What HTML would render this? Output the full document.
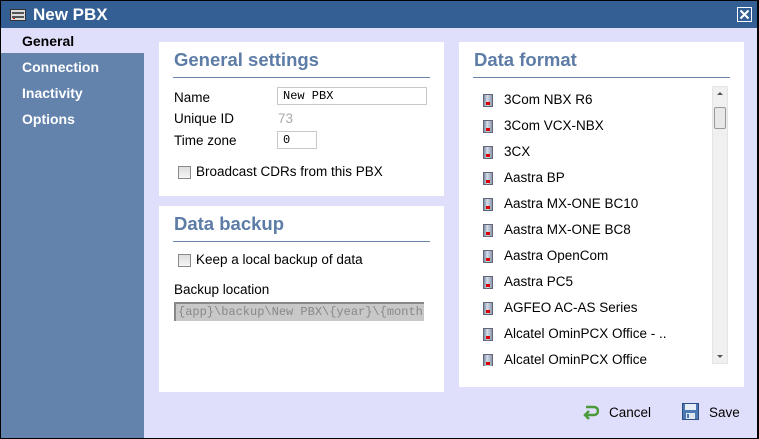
<!DOCTYPE html>
<html><head><meta charset="utf-8"><style>
*{margin:0;padding:0;box-sizing:border-box}
body{width:759px;height:439px;overflow:hidden;background:#000;font-family:"Liberation Sans",sans-serif;position:relative}
.a{position:absolute}
#win{left:1px;top:1px;width:756px;height:437px;background:#dfdffb}
#title{left:1px;top:1px;width:756px;height:27px;background:#335f94;color:#fff;font-weight:bold;font-size:17px}
#side{left:1px;top:53px;width:143px;height:385px;background:#6383ad}
.nav{position:absolute;left:22px;font-weight:bold;font-size:14px;color:#fff}
.panel{position:absolute;background:#fff}
h2{position:absolute;font-size:18.5px;font-weight:bold;color:#5d7ca6;left:15px;top:7px}
.rule{position:absolute;left:14px;right:14px;height:1px;background:#6c85ab}
.lbl{position:absolute;font-size:13.5px;color:#000}
.inp{position:absolute;border:1px solid #c8c8c8;font-family:"Liberation Mono",monospace;font-size:12px;padding:1px 5px;background:#fff}
.cb{position:absolute;width:13px;height:13px;border:1px solid #8a8a8a;background:linear-gradient(#ddd,#f6f6f6)}
.item{position:absolute;left:45px;font-size:13.5px;color:#000}
.ic{position:absolute;left:-21px;top:2px;width:10px;height:13px;background:linear-gradient(90deg,#7a8da6,#d5dde8 40%,#8a9ab0);border:1px solid #667}
.ic:after{content:"";position:absolute;left:2px;bottom:1px;width:4px;height:3px;background:#d00}
</style></head><body>
<div id="win" class="a"></div>
<div id="title" class="a">
  <svg class="a" style="left:9px;top:8px" width="16" height="12"><rect x="0.5" y="0.5" width="15" height="11" fill="#ddd" stroke="#333"/><rect x="2" y="3" width="12" height="2" fill="#555"/><rect x="2" y="7" width="12" height="2" fill="#555"/><rect x="3" y="9" width="2" height="1" fill="#c00"/></svg>
  <span class="a" style="left:32px;top:4px">New PBX</span>
  <svg class="a" style="left:736px;top:6px" width="15" height="15"><rect x="0.5" y="0.5" width="14" height="14" fill="none" stroke="#fff"/><path d="M3.5 3.5L11.5 11.5M11.5 3.5L3.5 11.5" stroke="#fff" stroke-width="2"/></svg>
</div>
<div id="side" class="a"></div>
<div class="nav" style="top:33px;color:#000">General</div>
<div class="nav" style="top:59px">Connection</div>
<div class="nav" style="top:85px">Inactivity</div>
<div class="nav" style="top:111px">Options</div>

<div class="panel" style="left:159px;top:42px;width:285px;height:154px">
  <h2>General settings</h2>
  <div class="rule" style="top:35px"></div>
  <div class="lbl" style="left:15px;top:48px">Name</div>
  <div class="inp" style="left:118px;top:45px;width:150px;height:18px">New PBX</div>
  <div class="lbl" style="left:15px;top:69px">Unique ID</div>
  <div class="lbl" style="left:119px;top:69px;color:#aaa">73</div>
  <div class="lbl" style="left:15px;top:91px">Time zone</div>
  <div class="inp" style="left:118px;top:89px;width:40px;height:18px">0</div>
  <div class="cb" style="left:19px;top:124px"></div>
  <div class="lbl" style="left:37px;top:122px">Broadcast CDRs from this PBX</div>
</div>

<div class="panel" style="left:159px;top:206px;width:285px;height:186px">
  <h2>Data backup</h2>
  <div class="rule" style="top:35px"></div>
  <div class="cb" style="left:19px;top:48px"></div>
  <div class="lbl" style="left:37px;top:46px">Keep a local backup of data</div>
  <div class="lbl" style="left:15px;top:76px">Backup location</div>
  <div class="inp" style="left:15px;top:96px;width:250px;height:19px;background:#c8c8c8;color:#888;border-color:#888 #c8c8c8 #c8c8c8 #888;border-width:2px 0 0 2px;padding:1px 2px;white-space:nowrap;overflow:hidden">{app}\backup\New PBX\{year}\{month}</div>
</div>

<div class="panel" style="left:459px;top:42px;width:285px;height:345px">
  <h2>Data format</h2>
  <div class="rule" style="top:35px"></div>
  <div class="a" style="left:0;top:44px;width:250px;height:280px;overflow:hidden">
    <div class="item" style="top:6px"><i class="ic"></i>3Com NBX R6</div>
    <div class="item" style="top:32px"><i class="ic"></i>3Com VCX-NBX</div>
    <div class="item" style="top:58px"><i class="ic"></i>3CX</div>
    <div class="item" style="top:84px"><i class="ic"></i>Aastra BP</div>
    <div class="item" style="top:110px"><i class="ic"></i>Aastra MX-ONE BC10</div>
    <div class="item" style="top:136px"><i class="ic"></i>Aastra MX-ONE BC8</div>
    <div class="item" style="top:162px"><i class="ic"></i>Aastra OpenCom</div>
    <div class="item" style="top:188px"><i class="ic"></i>Aastra PC5</div>
    <div class="item" style="top:214px"><i class="ic"></i>AGFEO AC-AS Series</div>
    <div class="item" style="top:240px"><i class="ic"></i>Alcatel OminPCX Office - ..</div>
    <div class="item" style="top:266px"><i class="ic"></i>Alcatel OminPCX Office</div>
  </div>
  <div class="a" style="left:253px;top:44px;width:16px;height:278px;background:#f0f0f0;border:1px solid #e4e4e4">
    <div class="a" style="left:4px;top:5px;width:0;height:0;border:3px solid transparent;border-bottom:3px solid #555;border-top:0"></div>
    <div class="a" style="left:1px;top:20px;width:12px;height:22px;background:#e8e8e8;border:1px solid #999;border-radius:2px"></div>
    <div class="a" style="left:4px;bottom:5px;width:0;height:0;border:3px solid transparent;border-top:3px solid #555;border-bottom:0"></div>
  </div>
</div>

<svg class="a" style="left:583px;top:404px" width="16" height="16"><path d="M3 3H11A4 4 0 0 1 11 11H4" fill="none" stroke="#4a9a3a" stroke-width="2.5"/><path d="M6 7L2 11L6 15" fill="none" stroke="#4a9a3a" stroke-width="2.5"/></svg>
<div class="lbl" style="left:609px;top:405px">Cancel</div>
<svg class="a" style="left:682px;top:403px" width="17" height="17"><rect x="0.5" y="0.5" width="16" height="16" fill="#4c78b4" stroke="#2d4f86"/><rect x="3" y="1" width="11" height="6" fill="#e8eef6"/><rect x="4" y="10" width="9" height="6" fill="#dfe6f0"/><rect x="5" y="11" width="2" height="4" fill="#4c78b4"/></svg>
<div class="lbl" style="left:709px;top:405px">Save</div>
</body></html>
